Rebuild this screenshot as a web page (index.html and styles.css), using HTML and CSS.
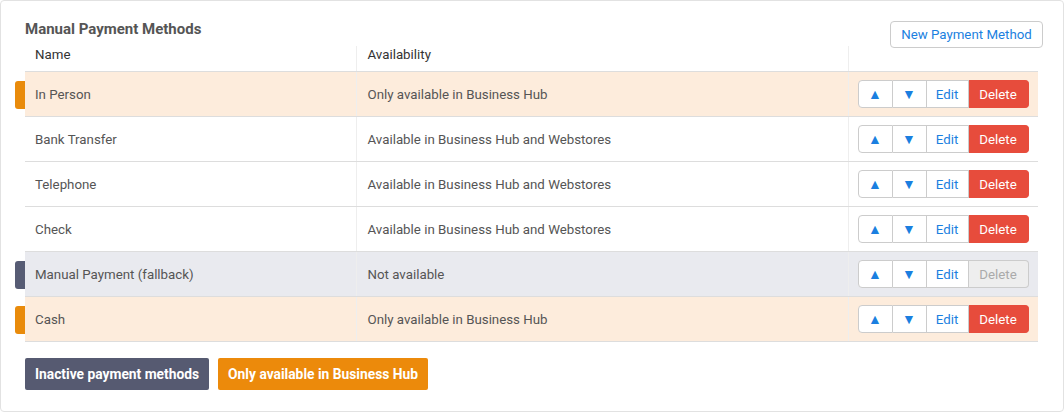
FILE: index.html
```html
<!DOCTYPE html>
<html lang="en">
<head>
    <meta charset="UTF-8">
    <meta name="viewport" content="width=device-width, initial-scale=1.0">
    <title>Manual Payment Methods</title>
    <link rel="stylesheet" href="styles.css">
</head>
<body>
    <div class="card">
        <div class="card-head">
            <h2>Manual Payment Methods</h2>
            <button class="btn-new">New Payment Method</button>
        </div>

        <table class="methods">
            <thead>
                <tr>
                    <th class="col-name">Name</th>
                    <th class="col-avail">Availability</th>
                    <th class="col-actions"></th>
                </tr>
            </thead>
            <tbody>
                <tr class="hub-only">
                    <td class="name">In Person</td>
                    <td>Only available in Business Hub</td>
                    <td class="actions">
                        <div class="btn-group">
                            <button class="up">&#9650;</button><button class="down">&#9660;</button><button class="edit">Edit</button><button class="delete">Delete</button>
                        </div>
                    </td>
                </tr>
                <tr>
                    <td class="name">Bank Transfer</td>
                    <td>Available in Business Hub and Webstores</td>
                    <td class="actions">
                        <div class="btn-group">
                            <button class="up">&#9650;</button><button class="down">&#9660;</button><button class="edit">Edit</button><button class="delete">Delete</button>
                        </div>
                    </td>
                </tr>
                <tr>
                    <td class="name">Telephone</td>
                    <td>Available in Business Hub and Webstores</td>
                    <td class="actions">
                        <div class="btn-group">
                            <button class="up">&#9650;</button><button class="down">&#9660;</button><button class="edit">Edit</button><button class="delete">Delete</button>
                        </div>
                    </td>
                </tr>
                <tr>
                    <td class="name">Check</td>
                    <td>Available in Business Hub and Webstores</td>
                    <td class="actions">
                        <div class="btn-group">
                            <button class="up">&#9650;</button><button class="down">&#9660;</button><button class="edit">Edit</button><button class="delete">Delete</button>
                        </div>
                    </td>
                </tr>
                <tr class="inactive">
                    <td class="name">Manual Payment (fallback)</td>
                    <td>Not available</td>
                    <td class="actions">
                        <div class="btn-group">
                            <button class="up">&#9650;</button><button class="down">&#9660;</button><button class="edit">Edit</button><button class="delete" disabled>Delete</button>
                        </div>
                    </td>
                </tr>
                <tr class="hub-only">
                    <td class="name">Cash</td>
                    <td>Only available in Business Hub</td>
                    <td class="actions">
                        <div class="btn-group">
                            <button class="up">&#9650;</button><button class="down">&#9660;</button><button class="edit">Edit</button><button class="delete">Delete</button>
                        </div>
                    </td>
                </tr>
            </tbody>
        </table>

        <div class="legend">
            <span class="tag tag-inactive">Inactive payment methods</span>
            <span class="tag tag-hub">Only available in Business Hub</span>
        </div>
    </div>
</body>
</html>
```

FILE: styles.css
```css
* {
    box-sizing: border-box;
    margin: 0;
    padding: 0;
}

body {
    font-family: Roboto, 'Liberation Sans', Arial, sans-serif;
    background-color: #fff;
    color: #555;
    font-size: 13.3px;
}

.card {
    width: 1064px;
    height: 412px;
    padding: 20px 20px 0 24px;
    border: 1px solid #e2e2e2;
    border-radius: 4px;
    background-color: #fff;
}

.card-head {
    display: flex;
    justify-content: space-between;
    align-items: flex-start;
    height: 25px;
}

.card-head h2 {
    font-size: 15px;
    font-weight: bold;
    line-height: 16px;
    color: #555;
}

.btn-new {
    position: relative;
    z-index: 1;
    height: 27px;
    width: 153px;
    font-family: inherit;
    font-size: 13.3px;
    color: #1b7fe0;
    background-color: #fff;
    border: 1px solid #ccc;
    border-radius: 4px;
    cursor: pointer;
}

.methods {
    width: 1013px;
    border-collapse: collapse;
    table-layout: fixed;
}

.methods th {
    height: 25px;
    text-align: left;
    font-weight: normal;
    color: #333;
    padding: 1px 10px 0;
    border-bottom: 1px solid #ddd;
    vertical-align: top;
    line-height: 16px;
}

.col-name {
    width: 331px;
}

.col-avail {
    width: 492px;
}

.methods th + th,
.methods td + td {
    border-left: 1px solid #eee;
}

.methods th.col-avail {
    padding-left: 11px;
}

.methods td {
    height: 45px;
    padding: 2px 10px 0;
    border-bottom: 1px solid #ddd;
    vertical-align: middle;
    color: #555;
}

.methods td + td {
    padding-left: 11px;
}

.methods td.actions {
    padding: 1px 0 0 9px;
}

.methods td.name {
    position: relative;
}

.hub-only td {
    background-color: #fdecdc;
}

.inactive td {
    background-color: #e9eaef;
}

.hub-only td.name::before,
.inactive td.name::before {
    content: "";
    position: absolute;
    left: -10px;
    top: 9px;
    width: 10px;
    height: 28px;
    border-radius: 3px 0 0 3px;
}

.hub-only td.name::before {
    background-color: #e98b0b;
}

.inactive td.name::before {
    background-color: #575c74;
}

.btn-group {
    display: flex;
    height: 28px;
}

.btn-group button {
    height: 28px;
    font-family: inherit;
    font-size: 13.3px;
    color: #1b7fe0;
    background-color: #fff;
    border: 1px solid #ccc;
    border-left: none;
    cursor: pointer;
}

.btn-group .up {
    width: 35px;
    border-left: 1px solid #ccc;
    border-radius: 4px 0 0 4px;
    font-size: 14px;
}

.btn-group .down {
    width: 34px;
    font-size: 14px;
}

.btn-group .edit {
    width: 42px;
}

.btn-group .delete {
    width: 60px;
    color: #fff;
    background-color: #e74c3c;
    border-color: #e74c3c;
    border-radius: 0 4px 4px 0;
}

.btn-group .delete:disabled {
    color: #aaa;
    background-color: #eee;
    border-color: #ccc;
    cursor: default;
}

.legend {
    display: flex;
    gap: 9px;
    margin-top: 16px;
}

.tag {
    display: inline-block;
    height: 32px;
    line-height: 32px;
    padding: 0 10px;
    border-radius: 2px;
    color: #fff;
    font-weight: bold;
    font-size: 13.8px;
    white-space: nowrap;
}

.tag-inactive {
    background-color: #565a71;
}

.tag-hub {
    background-color: #ec8a0b;
}
```
